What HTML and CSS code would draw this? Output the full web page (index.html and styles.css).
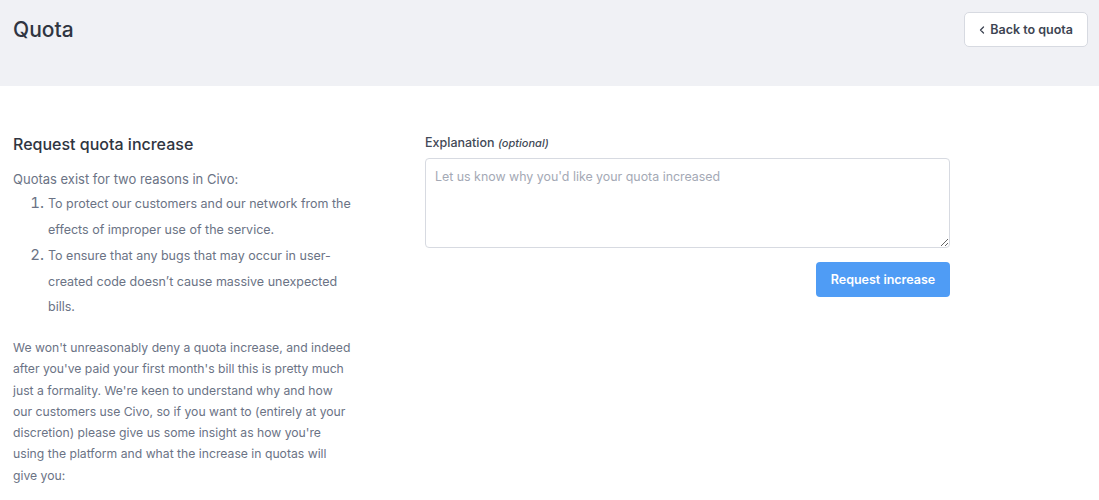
FILE: index.html
```html
<!DOCTYPE html>
<html lang="en">
<head>
  <meta charset="UTF-8">
  <title>Quota</title>
  <link rel="stylesheet" href="styles.css">
</head>
<body>
  <header class="page-header">
    <h1>Quota</h1>
    <a class="back-btn" href="#">
      <svg width="6" height="8" viewBox="0 0 6 8"><path d="M4.5 1 L1.5 4 L4.5 7" fill="none" stroke="currentColor" stroke-width="1.3" stroke-linecap="round" stroke-linejoin="round"/></svg>
      Back to quota
    </a>
  </header>

  <main class="content">
    <section class="info">
      <h2>Request quota increase</h2>
      <p class="lead">Quotas exist for two reasons in Civo:</p>
      <ol>
        <li>To protect our customers and our network from the effects of improper use of the service.</li>
        <li>To ensure that any bugs that may occur in user-created code doesn’t cause massive unexpected bills.</li>
      </ol>
      <p>We won't unreasonably deny a quota increase, and indeed after you've paid your first month's bill this is pretty much just a formality. We're keen to understand why and how our customers use Civo, so if you want to (entirely at your discretion) please give us some insight as how you're using the platform and what the increase in quotas will give you:</p>
    </section>

    <form class="request-form">
      <label for="explanation">Explanation <em>(optional)</em></label>
      <textarea id="explanation" placeholder="Let us know why you'd like your quota increased"></textarea>
      <div class="actions">
        <button type="button">Request increase</button>
      </div>
    </form>
  </main>
</body>
</html>
```

FILE: styles.css
```css
body {
  margin: 0;
  font-family: Inter, "Noto Sans", sans-serif;
  color: #6b7385;
  background: #fff;
}
.page-header {
  background: #f0f1f5;
  height: 86px;
  padding: 0 11px 0 13px;
  display: flex;
  justify-content: space-between;
  align-items: flex-start;
}
.page-header h1 {
  margin: 17px 0 0;
  font-size: 21px;
  font-weight: 500;
  color: #2f3541;
}
.back-btn {
  margin-top: 12px;
  display: flex;
  align-items: center;
  gap: 5px;
  height: 35px;
  box-sizing: border-box;
  padding: 0 14px;
  background: #fff;
  border: 1px solid #d7dae1;
  border-radius: 5px;
  color: #3d4452;
  font-size: 12.5px;
  font-weight: 600;
  text-decoration: none;
}
.content {
  display: flex;
  gap: 71px;
  padding: 0 13px;
}
.info {
  width: 341px;
  font-size: 13px;
}
.info h2 {
  margin: 48px 0 0;
  font-size: 16px;
  font-weight: 500;
  color: #2f3541;
}
.info .lead {
  margin: 15px 0 0;
  font-size: 13px;
  line-height: 21px;
}
.info ol {
  margin: 0;
  padding-left: 35px;
  font-size: 12.5px;
  line-height: 25.6px;
}
.info ol li::marker {
  font-size: 15px;
}
.info p {
  margin: 17px 0 0;
  font-size: 12.2px;
  line-height: 21.3px;
}
.request-form {
  width: 525px;
  padding-top: 49px;
}
.request-form label {
  display: block;
  font-size: 12.5px;
  font-weight: 500;
  color: #434a57;
}
.request-form label em {
  font-size: 11px;
  font-weight: 500;
}
textarea {
  display: block;
  margin-top: 8px;
  width: 100%;
  height: 90px;
  box-sizing: border-box;
  padding: 10px 9px;
  border: 1px solid #d7dae1;
  border-radius: 4px;
  font-family: Inter, "Noto Sans", sans-serif;
  font-size: 12.4px;
  color: #434a57;
}
textarea::placeholder {
  color: #a4a9b5;
}
.actions {
  display: flex;
  justify-content: flex-end;
  margin-top: 14px;
}
.actions button {
  height: 35px;
  width: 134px;
  background: #4f9cf5;
  border: none;
  border-radius: 4px;
  color: #fff;
  font-family: Inter, "Noto Sans", sans-serif;
  font-size: 12.5px;
  font-weight: 600;
}
```
